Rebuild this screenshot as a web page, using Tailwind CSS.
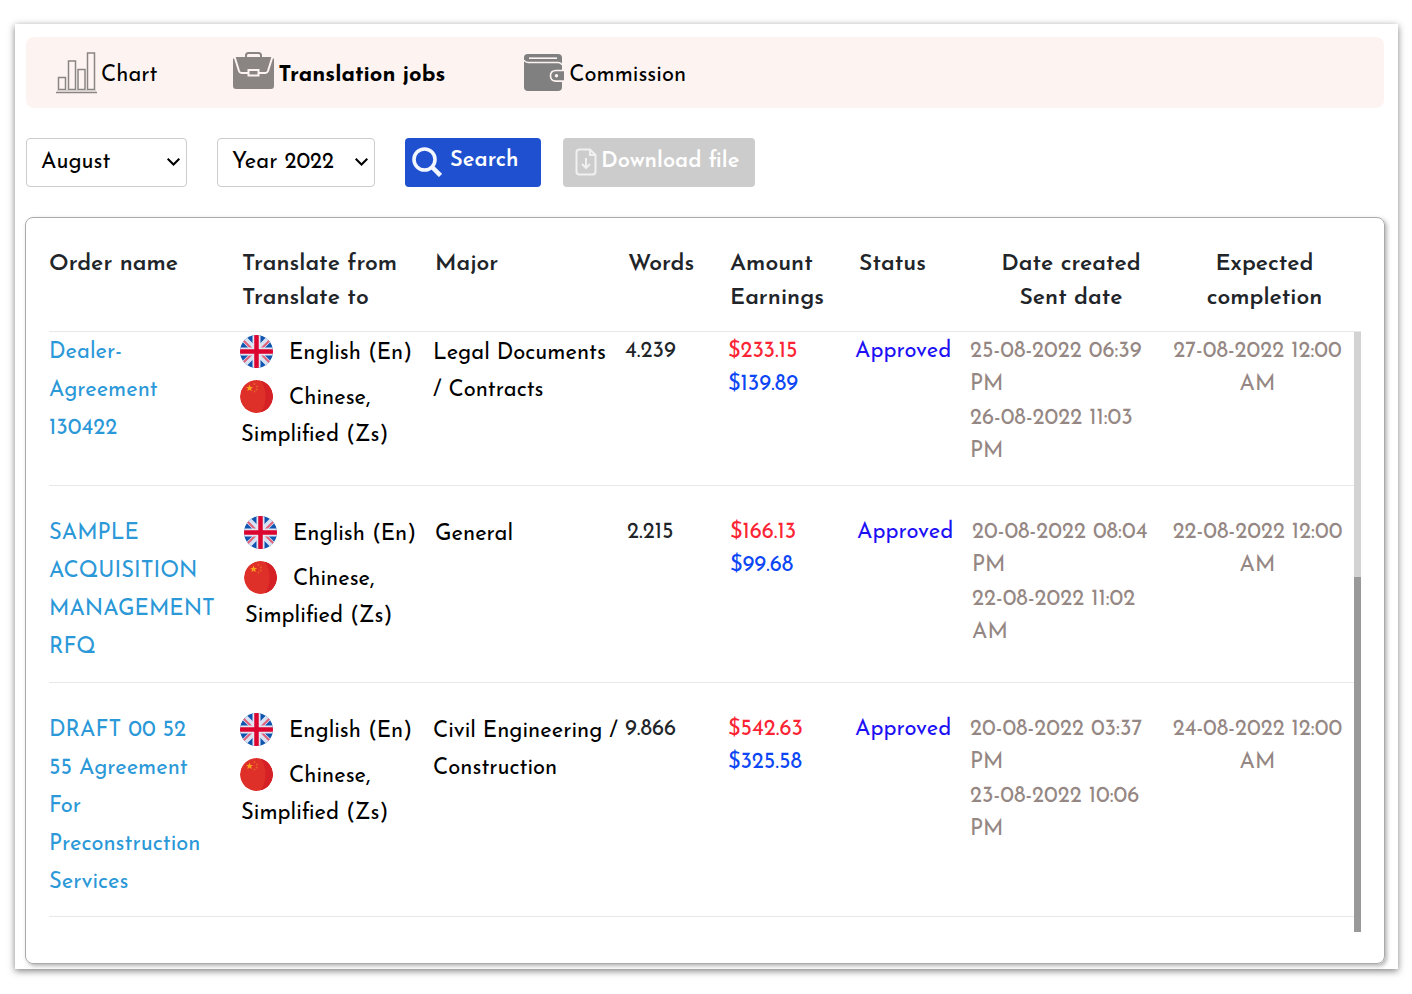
<!DOCTYPE html>
<html lang="en">
<head>
<meta charset="utf-8">
<meta name="viewport" content="width=device-width, initial-scale=1">
<title>Translation jobs</title>
<script src="https://cdn.jsdelivr.net/npm/@tailwindcss/browser@4"></script>
</head>
<body class="bg-white py-6 pr-[14px] pl-[15px] font-['Josefin_Sans','Lato',sans-serif] text-[22px] text-black">
<svg class="hidden" aria-hidden="true">
  <symbol id="uk" viewBox="0 0 33 33">
    <path fill="#0f55b0" d="M0 0h33v33H0z"/>
    <path stroke="#d9e2f2" stroke-width="6.5" d="M0 0l33 33M33 0L0 33"/>
    <path stroke="#e0607a" stroke-width="2" d="M1 3l12 12M32 3L20 15M1 30l12-12M32 30L20 18"/>
    <path stroke="#e3e6f2" stroke-width="8" d="M16.500 0v33M0 16.500h33"/>
    <path stroke="#dc0530" stroke-width="4.500" d="M16.500 0v33M0 16.500h33"/>
  </symbol>
  <symbol id="cn" viewBox="0 0 33 33">
    <circle cx="16.500" cy="16.500" r="16.500" fill="#de2f28"/>
    <path fill="#d52026" d="M21 .6a16.500 16.500 0 0 1 0 31.800C27 23 27 10 21 .6z"/>
    <path fill="#f9a01c" d="M9.500 4.500l1 2.400 2.600.1-2 1.600.7 2.500-2.300-1.400-2.200 1.400.7-2.500-2-1.600 2.600-.1z"/>
    <g fill="#e4602a"><circle cx="14.500" cy="4" r="1"/><circle cx="17" cy="6.500" r="1"/><circle cx="16.700" cy="9.500" r="1"/><circle cx="14.500" cy="11.500" r="1"/></g>
  </symbol>
</svg>

<main class="bg-white pt-[13px] pr-[14px] pb-[5px] pl-[11px] shadow-[0_2px_7px_rgba(0,0,0,0.5)]">
  <nav class="flex h-[71px] items-center rounded-lg bg-[#fdf4f2] pl-[30px]">
    <a href="#chart" class="flex items-center gap-1">
      <svg class="h-[42px] w-[41px]" viewBox="0 0 41 42" fill="none" stroke="#8a8583"><path stroke-width="1.500" d="M2.500 25.500h7v12h-7zM12.500 9h7v28.500h-7zM22 17.500h7v20h-7zM31.500 1h7v36.500h-7zM0 40.500h41"/><path stroke="#d5cecc" stroke-width="1.500" d="M1 38.800h39"/></svg>
      <span class="pt-[6px]">Chart</span>
    </a>
    <a href="#jobs" class="ml-[75px] flex items-center gap-[5px] font-bold" aria-current="page">
      <svg class="mb-1 h-[37px] w-[41px]" viewBox="0 0 41 37"><path fill="none" stroke="#8a8583" stroke-width="2" d="M13 5V3.500Q13 1 15.500 1h10Q28 1 28 3.500V5"/><path fill="#8a8583" d="M2 5h37l2 2v27q0 3-3 3H3q-3 0-3-3V7z"/><path fill="none" stroke="#fdf4f2" stroke-width="2" d="M1.500 4.500L6 19q.7 2 2.500 2H15M26 21h6.500q1.800 0 2.500-2l4.500-14.500M15.500 18h10v5.500h-10z"/></svg>
      <span class="pt-[6px]">Translation jobs</span>
    </a>
    <a href="#commission" class="ml-[79px] flex items-center gap-[5px]">
      <svg class="h-[37px] w-[40px]" viewBox="0 0 40 37"><path fill="#808080" d="M3.500 0H34q4 0 4 4v29q0 4-4 4H4q-4 0-4-4V3.500Q0 0 3.500 0z"/><path fill="none" stroke="#fdf4f2" stroke-width="1.300" d="M0 6q1 2.500 4 2.500h30q3 0 4 2.500"/><path stroke="#fdf4f2" stroke-width="1.600" d="M5 4.200h28"/><path fill="#808080" stroke="#fdf4f2" stroke-width="1.600" d="M41 16.500H32q-5.500 0-5.500 5.300t5.500 5.300h9z"/><circle cx="32.500" cy="21.800" r="1.700" fill="#fdf4f2"/></svg>
      <span class="pt-[6px]">Commission</span>
    </a>
  </nav>

  <form class="mt-[30px] flex h-[49px]">
    <div class="relative w-[161px]">
      <select aria-label="Month" class="h-full w-full appearance-none rounded border border-[#ccc] bg-white pl-[14px]"><option>August</option></select>
      <svg class="pointer-events-none absolute top-5 right-[7px] h-2 w-[13px]" viewBox="0 0 13 8" fill="none" stroke="#000" stroke-width="2"><path d="M.7.700l5.800 5.800 5.800-5.800"/></svg>
    </div>
    <div class="relative ml-[30px] w-[158px]">
      <select aria-label="Year" class="h-full w-full appearance-none rounded border border-[#ccc] bg-white pl-[14px]"><option>Year 2022</option></select>
      <svg class="pointer-events-none absolute top-5 right-[7px] h-2 w-[13px]" viewBox="0 0 13 8" fill="none" stroke="#000" stroke-width="2"><path d="M.7.700l5.800 5.800 5.800-5.800"/></svg>
    </div>
    <button type="button" class="ml-[30px] flex w-[136px] items-center gap-2 rounded bg-[#1e50d0] pl-[7px] font-semibold text-white">
      <svg class="mb-[2px] h-[30px] w-[30px]" viewBox="0 0 30 30" fill="none" stroke="#f3f6fd"><circle cx="12.500" cy="12.500" r="10.500" stroke-width="3.600"/><path stroke-width="4.500" d="M19.500 19.500l9 9"/></svg>
      <span class="pb-1">Search</span>
    </button>
    <button type="button" class="ml-[22px] flex w-[192px] items-center gap-1 rounded bg-[#ccc] pl-3 font-semibold whitespace-nowrap text-white">
      <svg class="mb-[2px] h-7 w-[22px] shrink-0" viewBox="0 0 22 28" fill="none" stroke="#f0f0f0" stroke-width="2"><path d="M4 1.500h11l5.500 5.500v16.500q0 3-3 3h-13q-3 0-3-3v-19q0-3 3-3zM15 1.500v5.500h5.500M11 10v10M7 16l4 4 4-4"/></svg>
      <span class="pb-[2px]">Download file</span>
    </button>
  </form>

  <section class="-mx-px mt-[30px] rounded-lg border border-[#aaa] px-[23px] pt-6 pb-[46px] shadow-[2px_2px_4px_rgba(0,0,0,0.3)]">
    <div class="relative">
      <table class="w-full table-fixed border-collapse text-left">
        <colgroup><col class="w-[192px]"><col class="w-[192px]"><col class="w-[192px]"><col class="w-[103px]"><col class="w-[127px]"><col class="w-[115px]"><col class="w-[202px]"><col class="w-[189px]"></colgroup>
        <thead class="text-[23px] leading-[34px] text-[#212529]">
          <tr class="h-[89px] border-b border-[#e8e8e8] align-top *:pt-[6px] *:font-semibold">
            <th scope="col">Order name</th>
            <th scope="col" class="pl-px">Translate from<br>Translate to</th>
            <th scope="col" class="pl-[2px]">Major</th>
            <th scope="col" class="pl-[3px]">Words</th>
            <th scope="col" class="pl-[2px]">Amount<br>Earnings</th>
            <th scope="col" class="pl-1">Status</th>
            <th scope="col" class="text-center">Date created<br>Sent date</th>
            <th scope="col" class="pr-1 text-center">Expected<br>completion</th>
          </tr>
        </thead>
        <tbody class="leading-[33px] whitespace-nowrap">
          <tr class="h-[154px] border-b border-[#e8e8e8] align-top">
            <td class="pt-[2px] leading-[38px]"><a href="#order-1" class="text-[#2b98d8]">Dealer-<br>Agreement<br>130422</a></td>
            <td class="pt-[3px] leading-[37px]"><div><svg class="-mt-[6px] -ml-px mr-4 inline-block size-[33px] rounded-full" aria-hidden="true"><use href="#uk"/></svg>English (En)</div><div class="mt-2"><svg class="-mt-[6px] -ml-px mr-4 inline-block size-[33px] rounded-full" aria-hidden="true"><use href="#cn"/></svg>Chinese,<br>Simplified (Zs)</div></td>
            <td class="pt-[3px] leading-[37px]">Legal Documents<br>/ Contracts</td>
            <td class="pt-[3px] text-[#212529]">4.239</td>
            <td class="pt-[3px]"><div class="text-[#fb2434]">$233.15</div><div class="text-[#0c46f5]">$139.89</div></td>
            <td class="pt-[3px] text-[#1d10f5]">Approved</td>
            <td class="pt-[3px] text-[#958783]"><div>25-08-2022 06:39<br>PM</div><div class="mt-px">26-08-2022 11:03<br>PM</div></td>
            <td class="pt-[3px] pr-[18px] text-center text-[#958783]">27-08-2022 12:00<br>AM</td>
          </tr>
          <tr class="h-[197px] border-b border-[#e8e8e8] align-top">
            <td class="pt-[29px] leading-[38px]"><a href="#order-2" class="text-[#2b98d8]">SAMPLE<br>ACQUISITION<br>MANAGEMENT<br>RFQ</a></td>
            <td class="pt-[30px] pl-1 leading-[37px]"><div><svg class="-mt-[6px] -ml-px mr-4 inline-block size-[33px] rounded-full" aria-hidden="true"><use href="#uk"/></svg>English (En)</div><div class="mt-2"><svg class="-mt-[6px] -ml-px mr-4 inline-block size-[33px] rounded-full" aria-hidden="true"><use href="#cn"/></svg>Chinese,<br>Simplified (Zs)</div></td>
            <td class="pt-[30px] pl-[2px] leading-[37px]">General</td>
            <td class="pt-[30px] pl-[2px] text-[#212529]">2.215</td>
            <td class="pt-[30px] pl-[2px]"><div class="text-[#fb2434]">$166.13</div><div class="text-[#0c46f5]">$99.68</div></td>
            <td class="pt-[30px] pl-[2px] text-[#1d10f5]">Approved</td>
            <td class="pt-[30px] pl-[2px] text-[#958783]"><div>20-08-2022 08:04<br>PM</div><div class="mt-px">22-08-2022 11:02<br>AM</div></td>
            <td class="pt-[30px] pr-[18px] text-center text-[#958783]">22-08-2022 12:00<br>AM</td>
          </tr>
          <tr class="h-[234px] border-b border-[#e8e8e8] align-top">
            <td class="pt-[29px] leading-[38px]"><a href="#order-3" class="text-[#2b98d8]">DRAFT 00 52<br>55 Agreement<br>For<br>Preconstruction<br>Services</a></td>
            <td class="pt-[30px] leading-[37px]"><div><svg class="-mt-[6px] -ml-px mr-4 inline-block size-[33px] rounded-full" aria-hidden="true"><use href="#uk"/></svg>English (En)</div><div class="mt-2"><svg class="-mt-[6px] -ml-px mr-4 inline-block size-[33px] rounded-full" aria-hidden="true"><use href="#cn"/></svg>Chinese,<br>Simplified (Zs)</div></td>
            <td class="pt-[30px] leading-[37px]">Civil Engineering /<br>Construction</td>
            <td class="pt-[30px] text-[#212529]">9.866</td>
            <td class="pt-[30px]"><div class="text-[#fb2434]">$542.63</div><div class="text-[#0c46f5]">$325.58</div></td>
            <td class="pt-[30px] text-[#1d10f5]">Approved</td>
            <td class="pt-[30px] text-[#958783]"><div>20-08-2022 03:37<br>PM</div><div class="mt-px">23-08-2022 10:06<br>PM</div></td>
            <td class="pt-[30px] pr-[18px] text-center text-[#958783]">24-08-2022 12:00<br>AM</td>
          </tr>
        </tbody>
      </table>
      <div class="absolute top-[90px] right-0 -bottom-[15px] flex w-[7px] flex-col justify-end bg-[#d3d3d3]" aria-hidden="true"><div class="h-[355px] bg-[#999]"></div></div>
    </div>
  </section>
</main>
</body>
</html>
